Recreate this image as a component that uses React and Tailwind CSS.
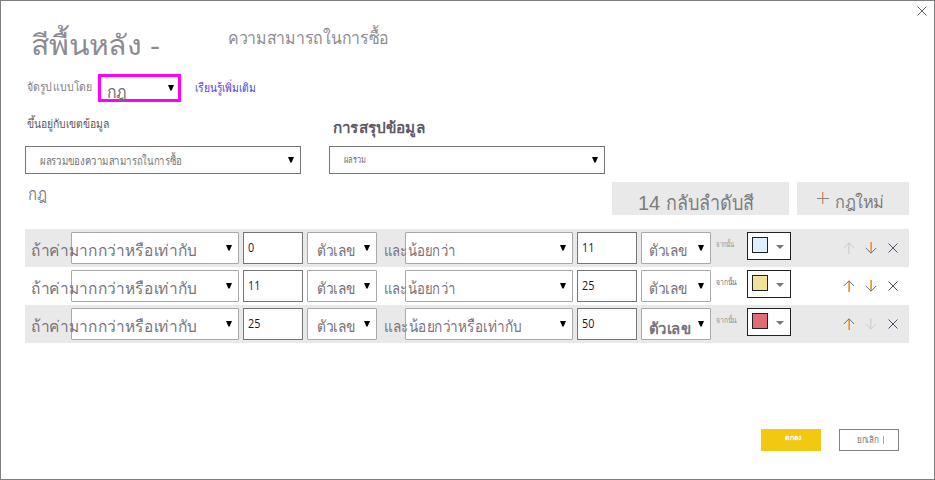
const FONT = "font-['Liberation_Sans','Noto_Sans',sans-serif]";

function Caret({ className = '' }) {
  return (
    <svg width="6" height="6" viewBox="0 0 6 6" className={`shrink-0 ${className}`}>
      <path d="M0 0H6L3.6 5.6H2.4Z" fill="currentColor" />
    </svg>
  );
}

function Text({ className = '', children }) {
  return <span className={`block origin-left leading-none whitespace-nowrap ${className}`}>{children}</span>;
}

function Arrow({ down, faded }) {
  return (
    <svg width="12" height="12" viewBox="0 0 12 12" className={`shrink-0 ${faded ? 'opacity-20' : ''}`}>
      <path d="M5.5 1V12" stroke={faded ? '#8a7485' : '#f5b062'} transform={down ? 'translate(0 -1)' : undefined} />
      <path d="M6.5 1V12" stroke={faded ? '#b5a5b0' : '#6fb0e6'} transform={down ? 'translate(0 -1)' : undefined} />
      <path
        d={down ? 'M.8 6L6 11.2L11.2 6' : 'M.8 6L6 .8L11.2 6'}
        fill="none"
        stroke={faded ? '#5b5261' : '#5d7180'}
        strokeWidth="1"
      />
    </svg>
  );
}

function Cross({ color = '#5b4a66' }) {
  return (
    <svg width="10" height="10" viewBox="0 0 10 10" className="shrink-0">
      <path d="M.5 .5L9.5 9.5M9.5 .5L.5 9.5" fill="none" stroke={color} strokeWidth="1" />
    </svg>
  );
}

function Select({ className = '', children }) {
  return (
    <div className={`flex h-8 shrink-0 justify-between rounded-[1px] border border-[#a9a9a9] bg-white pr-1.5 ${className}`}>
      <div className="w-0">{children}</div>
      <Caret className="mt-3 text-black" />
    </div>
  );
}

function NumberBox({ value }) {
  return (
    <div className="h-8 w-[60px] shrink-0 border border-[#767676] bg-white pt-[9px] pl-1">
      <Text className="w-fit scale-x-[0.9] font-['Open_Sans','Noto_Sans',sans-serif] text-[12px] text-[#1a1a2e]">{value}</Text>
    </div>
  );
}

const rows = [
  { from: '0', to: '11', upper: 'และน้อยกว่า', upperScale: 'scale-x-[0.82]', color: 'bg-[#deefff]', bg: 'bg-[#e9e9e9]', then: 'scale-x-[0.74] text-[#919191]', first: true },
  { from: '11', to: '25', upper: 'และน้อยกว่า', upperScale: 'scale-x-[0.82]', color: 'bg-[#f2e199]', bg: 'bg-white', then: 'scale-x-[0.85] text-[#77697a]' },
  { from: '25', to: '50', upper: 'และน้อยกว่าหรือเท่ากับ', upperScale: 'scale-x-[0.85]', color: 'bg-[#e06c75]', bg: 'bg-[#e9e9e9]', then: 'scale-x-[0.85] text-[#919191]', last: true },
];

function Rule({ from, to, upper, upperScale, color, bg, then, first, last }) {
  return (
    <div className={`flex h-[38px] items-start pt-[3px] ${bg}`}>
      <div className="relative z-10 w-[46px] shrink-0 pt-[11px] pl-1.5">
        <Text className="w-fit scale-x-[0.965] text-[16px] text-[#77747c]">ถ้าค่ามากกว่าหรือเท่ากับ</Text>
      </div>
      <Select className="mr-1 w-[168px]" />
      <NumberBox value={from} />
      <Select className="ml-1 w-[70px]">
        <Text className="mt-[10px] ml-[9px] w-fit scale-x-[0.86] text-[16px] text-[#77747c]">ตัวเลข</Text>
      </Select>
      <div className="relative z-10 w-7 shrink-0 pt-[11px] pl-[7px]">
        <Text className={`w-fit text-[16px] text-[#7c747f] ${upperScale}`}>{upper}</Text>
      </div>
      <Select className="mr-1 w-[168px]" />
      <NumberBox value={to} />
      <Select className="ml-1 w-[70px]">
        <Text
          className={`ml-[7px] w-fit text-[16px] text-[#77747c] ${
            last ? 'mt-3 scale-x-[0.93] font-bold' : 'mt-[10px] scale-x-[0.86]'
          }`}
        >
          ตัวเลข
        </Text>
      </Select>
      <div className="w-9 shrink-0 pt-[9px] pl-[5px]">
        <Text className={`w-fit text-[8px] ${then}`}>จากนั้น</Text>
      </div>
      <div className="flex h-7 w-11 shrink-0 border border-[#222] bg-white pt-1 pl-1">
        <div className={`size-4 border border-[#222] ${color}`} />
        <svg width="8" height="5" viewBox="0 0 8 5" className="mt-2 ml-2 text-[#777]">
          <path d="M0 0H8L4 4Z" fill="currentColor" />
        </svg>
      </div>
      <div className="mt-2.5 ml-[52px] flex items-center">
        <Arrow faded={first} />
        <div className="w-2.5" />
        <Arrow down faded={last} />
        <div className="w-[11px]" />
        <Cross />
      </div>
    </div>
  );
}

export default function App() {
  return (
    <div className={`flex h-[480px] w-[935px] flex-col overflow-hidden border border-[#7f7f7f] bg-white ${FONT}`}>
      <header className="flex h-[73px] shrink-0 items-start pl-[30px]">
        <div className="w-[197px] pt-[31px]">
          <Text className="w-fit scale-x-[1.075] text-[28px] text-[#8d8b91]">สีพื้นหลัง -</Text>
        </div>
        <Text className="mt-[28px] scale-x-[0.88] text-[18px] text-[#8d8b91]">ความสามารถในการซื้อ</Text>
        <div className="mt-[5px] mr-[7px] ml-auto">
          <Cross color="#666" />
        </div>
      </header>
      <section className="flex h-[41px] shrink-0 items-start pl-[26px]">
        <div className="w-[71px] pt-[7px]">
          <Text className="w-fit scale-x-[0.88] text-[12px] text-[#858387]">จัดรูปแบบโดย</Text>
        </div>
        <div className="flex h-7 w-[83px] shrink-0 justify-between border-3 border-[#ff00ff] pr-1 pl-1.5">
          <Text className="mt-[7px] scale-x-[0.93] text-[17px] text-[#707070]">กฎ</Text>
          <Caret className="mt-2 text-black" />
        </div>
        <Text className="mt-[8px] ml-3.5 scale-x-[0.86] text-[12px] text-[#4f46e5]">เรียนรู้เพิ่มเติม</Text>
      </section>
      <section className="flex h-[67px] shrink-0 gap-7 pl-6">
        <div className="flex w-[276px] flex-col">
          <div className="h-[31px] pt-[3px] pl-0.5">
            <Text className="w-fit scale-x-[0.865] text-[12px] text-[#5c5a60]">ขึ้นอยู่กับเขตข้อมูล</Text>
          </div>
          <div className="flex h-7 justify-between border border-[#767676] pr-1.5 pl-3.5">
            <Text className="mt-[8px] scale-x-[0.8] text-[12px] text-[#777]">ผลรวมของความสามารถในการซื้อ</Text>
            <Caret className="mt-2.5 text-black" />
          </div>
        </div>
        <div className="flex w-[276px] flex-col">
          <div className="h-[31px] pt-[5px] pl-1">
            <Text className="w-fit scale-x-[1.02] text-[15px] font-bold text-[#5f596a]">การสรุปข้อมูล</Text>
          </div>
          <div className="flex h-7 justify-between border border-[#767676] pr-1.5 pl-3.5">
            <Text className="mt-[9px] scale-x-[0.82] text-[9px] text-[#776e70]">ผลรวม</Text>
            <Caret className="mt-2.5 text-black" />
          </div>
        </div>
      </section>
      <section className="flex h-[47px] shrink-0 items-start pl-[26px]">
        <div className="w-[585px] pt-1 pl-px">
          <Text className="w-fit scale-x-[0.88] text-[17px] text-[#858387]">กฎ</Text>
        </div>
        <div className="flex h-[33px] w-[177px] shrink-0 gap-1.5 bg-[#e9e9e9] pt-[11px] pl-[26px]">
          <Text className="text-[20px] text-[#7d7d7d]">14</Text>
          <Text className="scale-x-[0.9] text-[20px] text-[#7d7d7d]">กลับลำดับสี</Text>
        </div>
        <div className="ml-2 flex h-[33px] w-28 shrink-0 bg-[#e9e9e9] pl-5">
          <svg width="12" height="12" viewBox="0 0 12 12" className="mt-2.5 shrink-0">
            <path d="M5.5 0V12" stroke="#e88a60" />
            <path d="M6.5 0V12" stroke="#a6d4e8" />
            <path d="M0 6.5H12" stroke="#888" />
          </svg>
          <Text className="mt-[12px] ml-[6px] scale-x-[0.96] text-[17px] text-[#7d7d7d]">กฎใหม่</Text>
        </div>
      </section>
      <main className="ml-6 w-[884px] shrink-0">
        {rows.map((row) => (
          <Rule key={row.from} {...row} />
        ))}
      </main>
      <footer className="mt-[86px] flex gap-[18px] pl-[760px]">
        <div className="h-[22px] w-[60px] bg-[#f2c811] pt-[5px] pl-6">
          <Text className="text-[7px] font-bold text-white">ตกลง</Text>
        </div>
        <div className="flex h-[22px] w-[60px] border border-[#858387] pt-[6px] pl-[17px]">
          <Text className="scale-x-[0.9] text-[9px] text-[#77747c]">ยกเลิก</Text>
          <div className="ml-0.5 h-2 w-px bg-[#8ab0ea]" />
        </div>
      </footer>
    </div>
  );
}
